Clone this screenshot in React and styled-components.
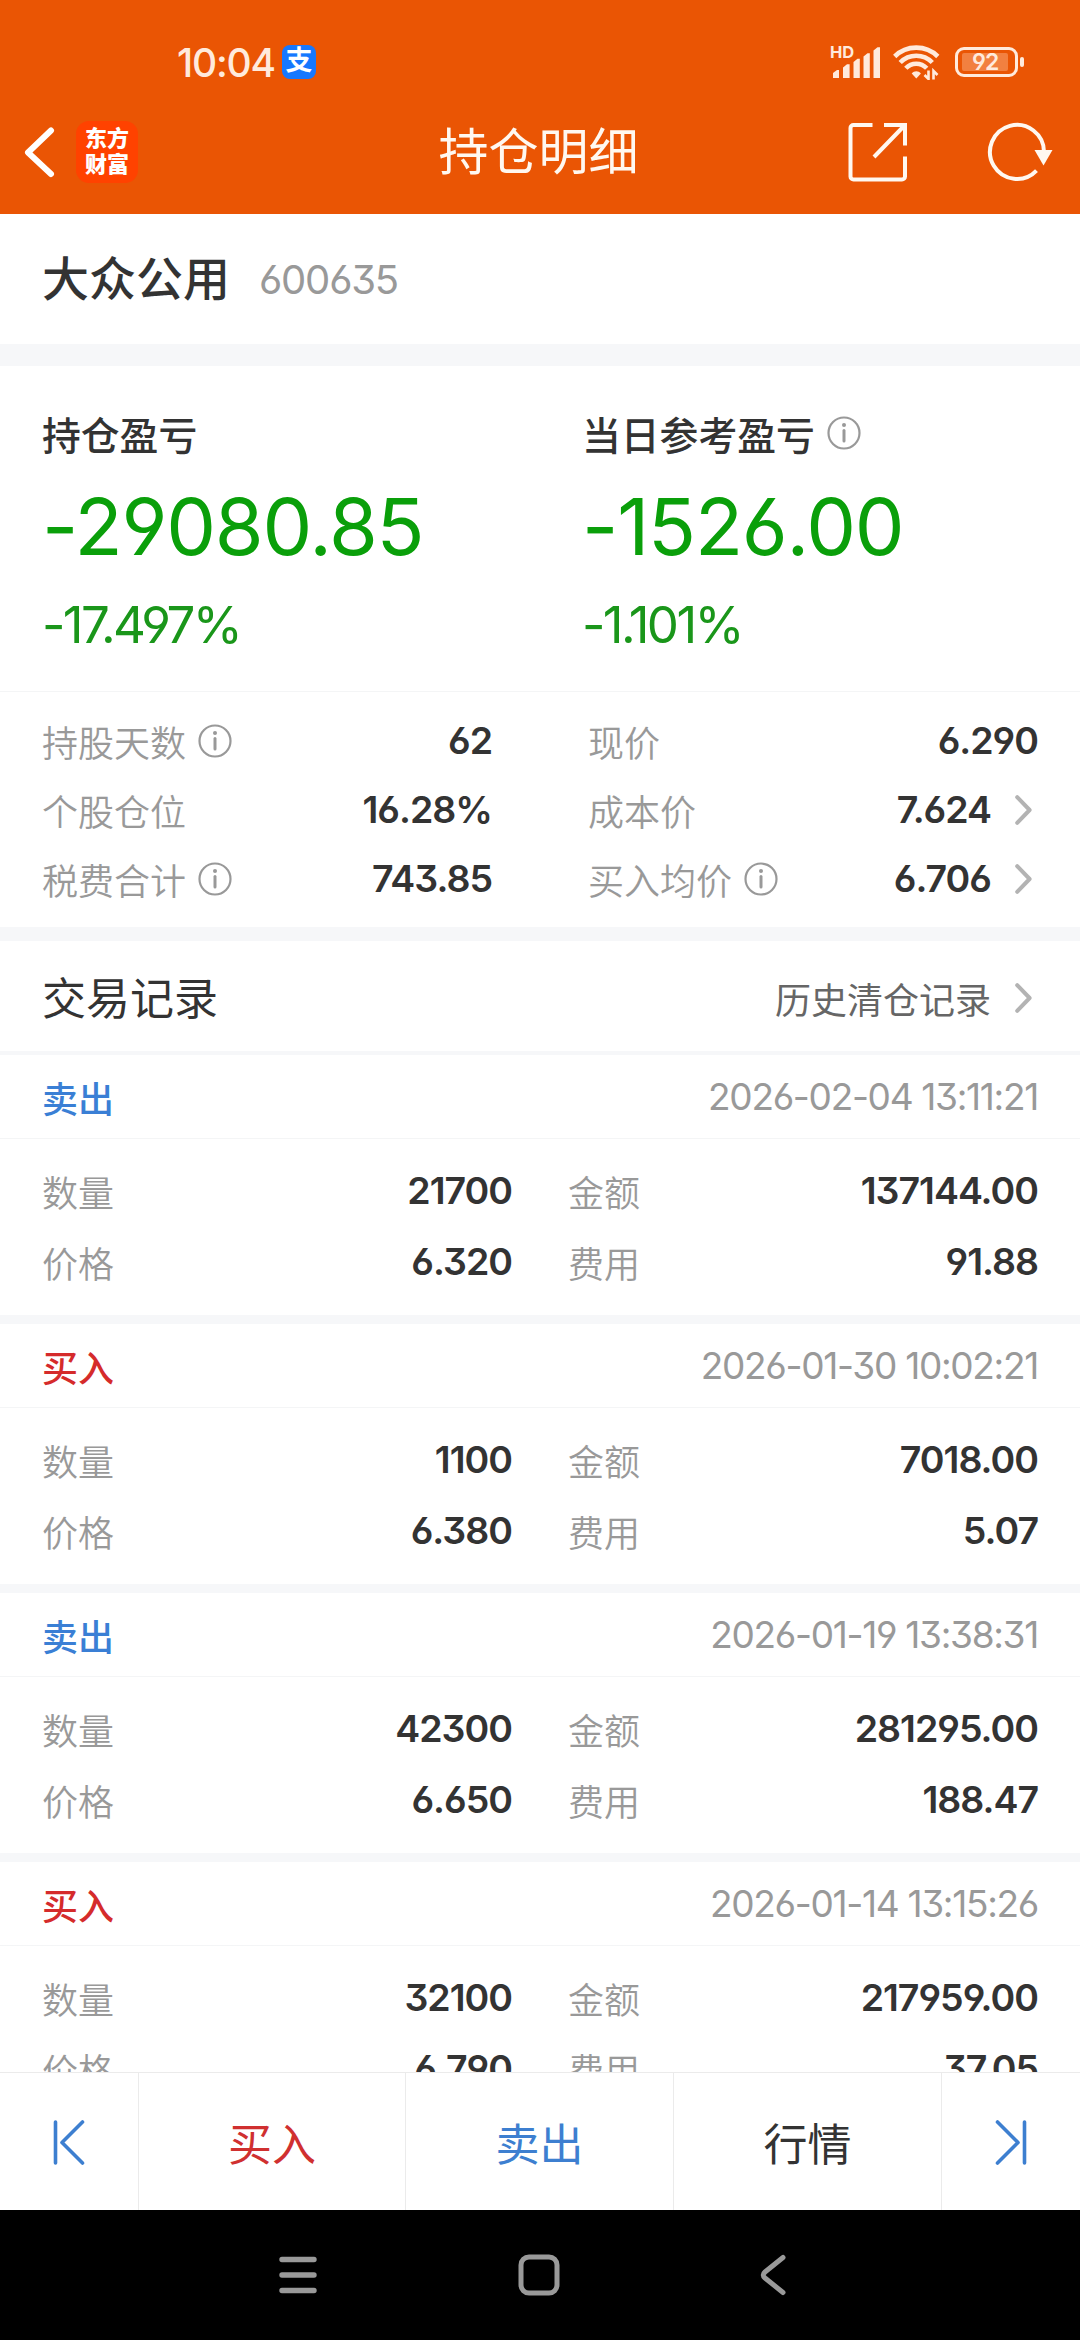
import styled, {createGlobalStyle} from 'styled-components'

const GlobalStyle = createGlobalStyle`
  * {
    box-sizing: border-box;
    margin: 0;
    padding: 0;
  }

  body {
    background: #fff;
    font-family: Inter, 'Noto Sans CJK SC', sans-serif;
    font-feature-settings: 'cv03', 'cv04', 'cv09', 'kern';
    color: #333;
  }

  svg {
    display: block;
    flex: none;
  }
`

const Screen = styled.div`
  width: 1080px;
  height: 2340px;
  display: flex;
  flex-direction: column;
  overflow: hidden;
  background: #fff;
`

const Header = styled.header`
  flex: none;
  height: 214px;
  background: #ea5504;
`

const StatusBar = styled.div`
  height: 89px;
  padding: 35px 55px 0 177px;
  display: flex;
  align-items: center;
  color: #ffeadc;
`

const Clock = styled.span`
  width: 105px;
  font-size: 39px;
  font-weight: 500;
  letter-spacing: -1.2px;
  white-space: nowrap;
`

const PayBadge = styled.span`
  width: 34px;
  height: 34px;
  border-radius: 8px;
  background: #1678ff;
  color: #fff;
  font-size: 27px;
  font-weight: 700;
  line-height: 32px;
  text-align: center;
`

const StatusIcons = styled.div`
  margin-left: auto;
  display: flex;
  align-items: center;
`

const Signal = styled.div`
  width: 51px;
  height: 34px;
  margin-right: 12px;
  position: relative;
`

const SignalLabel = styled.span`
  position: absolute;
  left: 0;
  top: 0;
  font-size: 16.5px;
  line-height: 14px;
  font-weight: 700;
`

const BatteryBox = styled.div`
  width: 70px;
  height: 30px;
  margin-left: 15px;
  display: flex;
  align-items: center;
`

const BatteryShell = styled.div`
  width: 63px;
  height: 30px;
  padding: 3px 4px;
  border: 3px solid #ffeadc;
  border-radius: 9px;
`

const BatteryLevel = styled.div`
  width: 46px;
  height: 18px;
  border-radius: 2px;
  background: #f28040;
  padding-left: 10px;
  font-size: 23px;
  line-height: 19px;
  font-weight: 600;
  letter-spacing: -1px;
`

const BatteryTip = styled.div`
  width: 4px;
  height: 10px;
  margin-left: 2px;
  border-radius: 2px;
  background: #ffeadc;
`

const TitleBar = styled.div`
  height: 125px;
  padding: 0 27px 0 24px;
  display: grid;
  grid-template-columns: 1fr auto 1fr;
  align-items: center;
`

const TitleSide = styled.div`
  display: flex;
  align-items: center;
  justify-content: ${props => props.end ? 'flex-end' : 'flex-start'};
  gap: ${props => props.end ? '79px' : '21px'};
`

const Title = styled.h1`
  font-size: 50px;
  font-weight: 400;
  line-height: 60px;
  color: #fff8f0;
`

const AppLogo = styled.div`
  width: 62px;
  height: 62px;
  padding-top: 4px;
  border-radius: 13px;
  background: #ff4200;
  color: #fff;
  font-size: 22px;
  font-weight: 900;
  line-height: 26px;
  text-align: center;
`

const Stock = styled.div`
  flex: none;
  height: 130px;
  padding: 0 42px;
  display: flex;
  align-items: center;
  gap: 29px;
`

const StockName = styled.h2`
  font-size: 47px;
  font-weight: 500;
  line-height: 60px;
`

const StockCode = styled.span`
  font-size: 40px;
  color: #999;
  letter-spacing: -1.2px;
`

const Band = styled.div`
  flex: none;
  height: ${props => props.size}px;
  background: #f6f7f9;
`

const Summary = styled.section`
  flex: none;
  height: 326px;
  padding: 42px 42px 0;
  display: grid;
  grid-template-columns: 540px 1fr;
  border-bottom: 1px solid #f4f5f6;
`

const SummaryTitle = styled.div`
  height: 50px;
  display: flex;
  align-items: center;
  gap: 12px;
  font-size: 38.8px;
  font-weight: 500;
`

const ProfitAmount = styled.p`
  height: 100px;
  margin-top: 18px;
  font-size: 79px;
  line-height: 100px;
  letter-spacing: -1.2px;
  color: #0a9f0a;
  white-space: nowrap;
`

const ProfitRate = styled.p`
  height: 60px;
  margin-top: 19px;
  font-size: 51px;
  line-height: 60px;
  letter-spacing: -2.6px;
  color: #1a961a;
`

const Stats = styled.section`
  flex: none;
  height: 235px;
  padding: 14px 42px 0;
  display: grid;
  grid-template-columns: 450px 450px;
  grid-auto-rows: 69px;
  column-gap: 96px;
`

const Field = styled.div`
  display: flex;
  align-items: center;
`

const FieldLabel = styled.span`
  margin-right: auto;
  display: flex;
  align-items: center;
  gap: 12px;
  font-size: 36px;
  font-weight: 350;
  color: #999;
`

const FieldValue = styled.span`
  font-size: 37.5px;
  font-weight: 600;
  letter-spacing: -1px;
  color: #333;
`

const SectionHead = styled.div`
  flex: none;
  height: 110px;
  padding: 0 42px;
  display: flex;
  align-items: center;
  justify-content: space-between;
`

const SectionTitle = styled.h3`
  font-size: 44px;
  font-weight: 400;
`

const HistoryLink = styled.div`
  padding-top: 4px;
  display: flex;
  align-items: center;
  font-size: 36px;
  color: #666;
`

const Records = styled.main`
  flex: 1;
  min-height: 0;
  overflow: hidden;
`

const Record = styled.article`
  height: 269px;
  border-bottom: 9px solid #f6f7f9;
`

const RecordHead = styled.div`
  height: 84px;
  padding: 0 42px;
  display: flex;
  align-items: center;
  justify-content: space-between;
  border-bottom: 1px solid #f4f5f6;
`

const RecordType = styled.span`
  font-size: 36px;
  font-weight: 500;
  color: ${props => props.buy ? '#d52b2b' : '#3a7fd5'};
`

const RecordTime = styled.time`
  font-size: 37px;
  letter-spacing: -1.3px;
  color: #999;
`

const RecordBody = styled.div`
  padding: 16px 42px 0;
  display: grid;
  grid-template-columns: 470px 470px;
  grid-auto-rows: 71px;
  column-gap: 56px;
`

const Footer = styled.footer`
  flex: none;
  height: 138px;
  display: grid;
  grid-template-columns: 139px 267px 268px 268px 138px;
  border-top: 1px solid #ebebeb;
`

const FooterButton = styled.button`
  display: flex;
  align-items: center;
  justify-content: center;
  border: 0;
  border-right: ${props => props.last ? '0' : '1px solid #ebebeb'};
  background: #fff;
  color: ${props => props.color};
  font-family: inherit;
  font-size: 44px;
  font-weight: 400;
`

const NavBar = styled.nav`
  flex: none;
  height: 130px;
  padding: 0 294px 0 279px;
  display: flex;
  align-items: center;
  justify-content: space-between;
  background: #000;
`

const InfoIcon = () => (
    <svg width="34" height="34" viewBox="0 0 34 34" fill="none" stroke="#999" strokeLinecap="round">
        <circle cx="17" cy="17" r="15.5" strokeWidth="2.2" />
        <path d="M17 14.5v10.5" strokeWidth="3" />
        <circle cx="17" cy="9" r="2" fill="#999" stroke="none" />
    </svg>
)

const ArrowBox = styled.svg`
  margin: 0 6px 0 24px;
`

const Arrow = () => (
    <ArrowBox width="17" height="30" viewBox="0 0 17 30" fill="none" stroke="#b3b3b3" strokeWidth="4" strokeLinecap="round" strokeLinejoin="round">
        <path d="M2.2 2.2L14.6 15L2.2 27.8" />
    </ArrowBox>
)

const SignalBars = () => (
    <svg width="51" height="34" viewBox="0 0 51 34" fill="#ffeadc">
        <path d="M3 28l4-3h2v8H3z" />
        <path d="M13 22.5l4-3.2h2.6V33H13z" />
        <path d="M23.5 17l4-3.2h2.3V33h-6.3z" />
        <path d="M33.5 11.500l4-3.200h2.300V33h-6.300z" />
        <path d="M43.500 5.500l4-3.200h2.500V33h-6.500z" />
    </svg>
)

const Wifi = () => (
    <svg width="47" height="36" viewBox="0 0 47 36" fill="none" stroke="#ffeadc" strokeWidth="4.600">
        <path d="M1.700 12.500C13.500 0.700 33 0.700 44.800 12.500" />
        <path d="M7.200 18.500C16 9.500 30.500 9.500 39.300 18.500" />
        <path d="M12.800 24.300C18.500 18.200 28 18.200 33.700 24.300" />
        <path d="M18.700 29.500c2.500-3 6.700-3 9.200 0l-4.600 5z" fill="#ffeadc" stroke="none" />
        <path d="M35.500 26.500v8.500l-4-4M40.500 35.500V27l4 4" strokeWidth="2.600" />
    </svg>
)

const BackIcon = () => (
    <svg width="31" height="52" viewBox="0 0 31 52" fill="none" stroke="#fff" strokeWidth="6" strokeLinecap="round" strokeLinejoin="round">
        <path d="M27 4.500L4 26.500L27 48" />
    </svg>
)

const ShareIcon = () => (
    <svg width="60" height="60" viewBox="0 0 60 60" fill="none" stroke="#fff8f0" strokeWidth="4">
        <path d="M24.500 3H5.500a3 3 0 0 0-3 3v48.500a3 3 0 0 0 3 3H54a3 3 0 0 0 3-3V34.500" />
        <path d="M36 3h21v20.500M57 3L26 35" />
    </svg>
)

const RefreshIcon = () => (
    <svg width="66" height="60" viewBox="0 0 66 60" fill="none" stroke="#fff8f0" strokeWidth="4">
        <path d="M57 30A27 27 0 1 0 49.500 48.600" />
        <path d="M47.500 28h18l-9 15.500z" fill="#fff8f0" stroke="none" />
    </svg>
)

const StepIcon = ({flip}) => (
    <svg width="32" height="46" viewBox="0 0 32 46" fill="none" stroke="#3d7fd0" strokeWidth="3.600" strokeLinecap="round" strokeLinejoin="round">
        {flip
            ? <path d="M29.500 3v41M2.500 3l20.500 20.500L2.500 44" />
            : <path d="M2.500 3v41M29.500 3L9 23.500L29.500 44" />}
    </svg>
)

const stats = [
    {label: '持股天数', value: '62', info: true},
    {label: '现价', value: '6.290'},
    {label: '个股仓位', value: '16.28%'},
    {label: '成本价', value: '7.624', arrow: true},
    {label: '税费合计', value: '743.85', info: true},
    {label: '买入均价', value: '6.706', info: true, arrow: true},
]

const records = [
    {type: '卖出', time: '2026-02-04 13:11:21', count: '21700', amount: '137144.00', price: '6.320', fee: '91.88'},
    {type: '买入', time: '2026-01-30 10:02:21', count: '1100', amount: '7018.00', price: '6.380', fee: '5.07'},
    {type: '卖出', time: '2026-01-19 13:38:31', count: '42300', amount: '281295.00', price: '6.650', fee: '188.47'},
    {type: '买入', time: '2026-01-14 13:15:26', count: '32100', amount: '217959.00', price: '6.790', fee: '37.05'},
]

const DataField = ({label, value, info, arrow}) => (
    <Field>
        <FieldLabel>{label}{info && <InfoIcon />}</FieldLabel>
        <FieldValue>{value}</FieldValue>
        {arrow && <Arrow />}
    </Field>
)

const TradeRecord = ({record}) => (
    <Record>
        <RecordHead>
            <RecordType buy={record.type === '买入' ? 1 : undefined}>{record.type}</RecordType>
            <RecordTime>{record.time}</RecordTime>
        </RecordHead>
        <RecordBody>
            <DataField label="数量" value={record.count} />
            <DataField label="金额" value={record.amount} />
            <DataField label="价格" value={record.price} />
            <DataField label="费用" value={record.fee} />
        </RecordBody>
    </Record>
)

const App = () => {
    return (
        <Screen>
            <GlobalStyle />
            <Header>
                <StatusBar>
                    <Clock>10:04</Clock>
                    <PayBadge>支</PayBadge>
                    <StatusIcons>
                        <Signal>
                            <SignalBars />
                            <SignalLabel>HD</SignalLabel>
                        </Signal>
                        <Wifi />
                        <BatteryBox>
                            <BatteryShell>
                                <BatteryLevel>92</BatteryLevel>
                            </BatteryShell>
                            <BatteryTip />
                        </BatteryBox>
                    </StatusIcons>
                </StatusBar>
                <TitleBar>
                    <TitleSide>
                        <BackIcon />
                        <AppLogo>东方<br />财富</AppLogo>
                    </TitleSide>
                    <Title>持仓明细</Title>
                    <TitleSide end={1}>
                        <ShareIcon />
                        <RefreshIcon />
                    </TitleSide>
                </TitleBar>
            </Header>
            <Stock>
                <StockName>大众公用</StockName>
                <StockCode>600635</StockCode>
            </Stock>
            <Band size={22} />
            <Summary>
                <div>
                    <SummaryTitle>持仓盈亏</SummaryTitle>
                    <ProfitAmount>-29080.85</ProfitAmount>
                    <ProfitRate>-17.497%</ProfitRate>
                </div>
                <div>
                    <SummaryTitle>当日参考盈亏<InfoIcon /></SummaryTitle>
                    <ProfitAmount>-1526.00</ProfitAmount>
                    <ProfitRate>-1.101%</ProfitRate>
                </div>
            </Summary>
            <Stats>
                {stats.map(item => <DataField key={item.label} {...item} />)}
            </Stats>
            <Band size={14} />
            <SectionHead>
                <SectionTitle>交易记录</SectionTitle>
                <HistoryLink>历史清仓记录<Arrow /></HistoryLink>
            </SectionHead>
            <Band size={4} />
            <Records>
                {records.map(record => <TradeRecord key={record.time} record={record} />)}
            </Records>
            <Footer>
                <FooterButton><StepIcon /></FooterButton>
                <FooterButton color="#d03030">买入</FooterButton>
                <FooterButton color="#3d7fd0">卖出</FooterButton>
                <FooterButton color="#333">行情</FooterButton>
                <FooterButton last={1}><StepIcon flip /></FooterButton>
            </Footer>
            <NavBar>
                <svg width="38" height="42" viewBox="0 0 38 42" stroke="#999" strokeWidth="5.400" strokeLinecap="round">
                    <path d="M3 5.500h32M3 21h32M3 36.500h32" />
                </svg>
                <svg width="42" height="42" viewBox="0 0 42 42" fill="none" stroke="#999" strokeWidth="5">
                    <rect x="3" y="3" width="36" height="36" rx="8" />
                </svg>
                <svg width="26" height="42" viewBox="0 0 26 42" fill="none" stroke="#999" strokeWidth="5" strokeLinecap="round">
                    <path d="M23 3.500L5 18q-3.500 3 0 6L23 38.500" />
                </svg>
            </NavBar>
        </Screen>
    )
}

export default App
